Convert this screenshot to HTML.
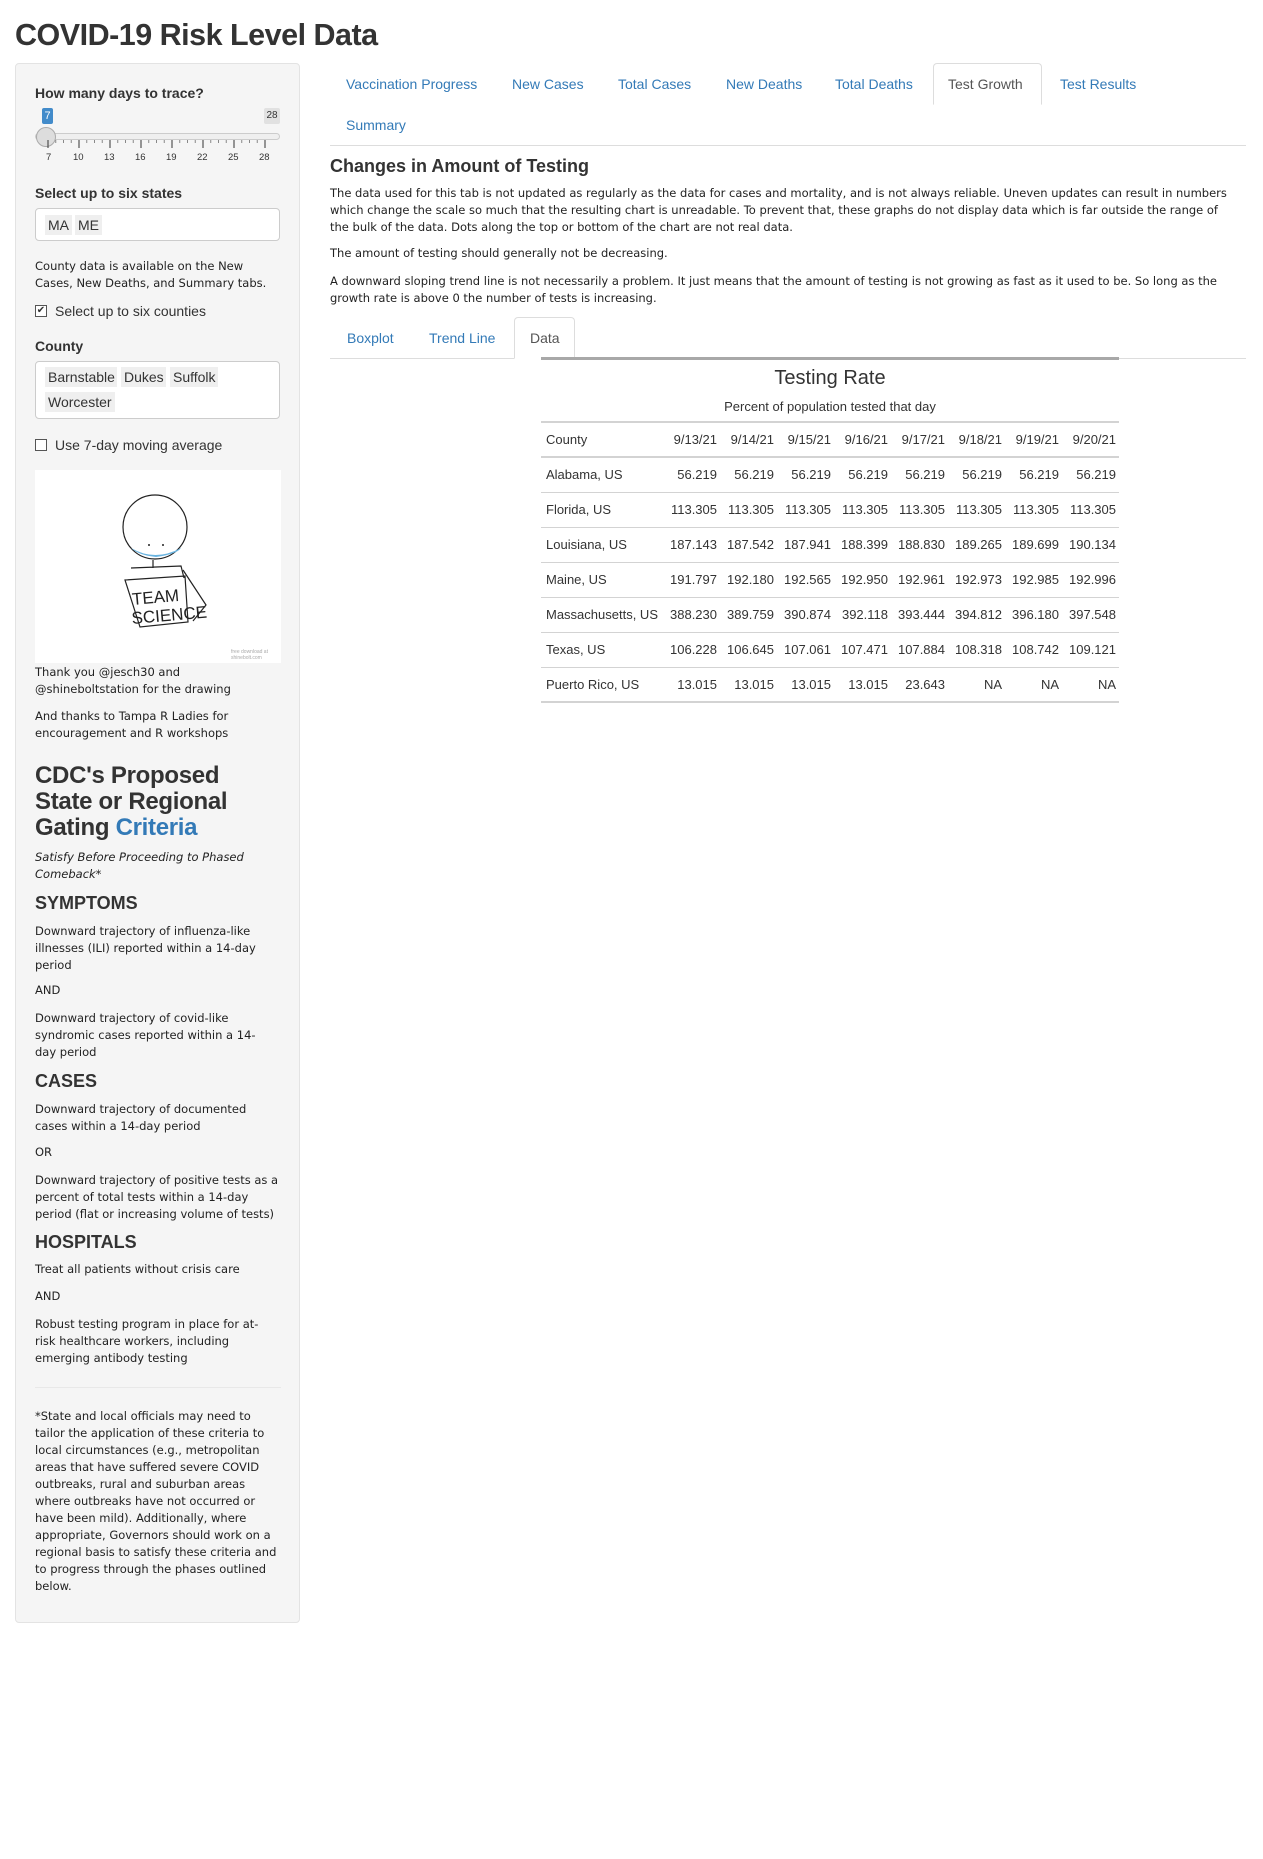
<!DOCTYPE html>
<html><head><meta charset="utf-8">
<style>
*{box-sizing:border-box;margin:0;padding:0}
body{width:1263px;height:1859px;background:#fff;font-family:"Liberation Sans",Arial,sans-serif;color:#333;position:relative;overflow:hidden}
.a{position:absolute;white-space:nowrap}
.v{font-family:"DejaVu Sans",Verdana,sans-serif;font-size:11.5px;color:#222}
h1{position:absolute;left:15px;top:18px;font-size:30.5px;font-weight:bold;letter-spacing:-0.5px;color:#333}
.side{position:absolute;left:15px;top:63px;width:285px;height:1560px;background:#f5f5f5;border:1px solid #e3e3e3;border-radius:4px}
.lbl{font-weight:bold;font-size:14px;color:#333}
.box{position:absolute;background:#fff;border:1px solid #ccc;border-radius:4px}
.tag{position:absolute;background:#efefef;font-size:14px;padding:2px 3px;color:#333}
.blue{color:#337ab7}
.tab{position:absolute;font-size:14px;color:#337ab7}
.act{position:absolute;border:1px solid #ddd;border-bottom:1px solid #fff;border-radius:4px 4px 0 0;background:#fff}
table{border-collapse:collapse;font-size:13px;color:#333;table-layout:fixed}
td{height:35px;border-top:1px solid #d3d3d3;text-align:right;padding:0 3px 0 0;vertical-align:middle;white-space:nowrap}
td:first-child{text-align:left;padding-left:5px}
</style></head><body>
<h1>COVID-19 Risk Level Data</h1>
<div class="side"></div>
<div class="a lbl" style="left:35px;top:85px">How many days to trace?</div>
<div class="a" style="left:42px;top:108px;width:11px;height:16px;background:#428bca;color:#fff;font-size:11px;text-align:center;line-height:16px;border-radius:2px">7</div>
<div class="a" style="left:264px;top:108px;width:16px;height:16px;background:#e1e1e1;color:#333;font-size:10px;text-align:center;line-height:16px;border-radius:2px">28</div>
<div class="a" style="left:35px;top:133px;width:245px;height:7px;background:#efefef;border:1px solid #ccc;border-radius:4px"></div>
<div class="a" style="left:36px;top:127px;width:20px;height:20px;border-radius:50%;background:#ddd;border:1px solid #aaa"></div>
<svg class="a" style="left:35px;top:140px" width="250" height="10"><g stroke="#333" stroke-width="1">
<path d="M13 0v8M44 0v8M75 0v8M106 0v8M137 0v8M168 0v8M199 0v8M230 0v8"/>
<path d="M20.75 0v3M28.5 0v3M36.25 0v3M51.75 0v3M59.5 0v3M67.25 0v3M82.75 0v3M90.5 0v3M98.25 0v3M113.75 0v3M121.5 0v3M129.25 0v3M144.75 0v3M152.5 0v3M160.25 0v3M175.75 0v3M183.5 0v3M191.25 0v3M206.75 0v3M214.5 0v3M222.25 0v3" stroke="#888"/></g></svg>
<div class="a" style="left:46px;top:152px;font-size:9.5px">7</div>
<div class="a" style="left:73px;top:152px;font-size:9.5px">10</div>
<div class="a" style="left:104px;top:152px;font-size:9.5px">13</div>
<div class="a" style="left:135px;top:152px;font-size:9.5px">16</div>
<div class="a" style="left:166px;top:152px;font-size:9.5px">19</div>
<div class="a" style="left:197px;top:152px;font-size:9.5px">22</div>
<div class="a" style="left:228px;top:152px;font-size:9.5px">25</div>
<div class="a" style="left:259px;top:152px;font-size:9.5px">28</div>
<div class="a lbl" style="left:35px;top:185px">Select up to six states</div>
<div class="box" style="left:35px;top:208px;width:245px;height:33px"></div>
<div class="tag" style="left:45px;top:215px;width:27px">MA</div>
<div class="tag" style="left:75px;top:215px;width:27px">ME</div>
<div class="a v" style="left:35px;top:258px;line-height:17px">County data is available on the New<br>Cases, New Deaths, and Summary tabs.</div>
<div class="a" style="left:35px;top:305px;width:12px;height:12px;border:1px solid #555;background:#fff;font-size:10px;line-height:10px;text-align:center">✔</div>
<div class="a" style="left:55px;top:303px;font-size:14px">Select up to six counties</div>
<div class="a lbl" style="left:35px;top:338px">County</div>
<div class="box" style="left:35px;top:361px;width:245px;height:58px"></div>
<div class="tag" style="left:45px;top:367px;width:72px">Barnstable</div>
<div class="tag" style="left:121px;top:367px;width:45px">Dukes</div>
<div class="tag" style="left:170px;top:367px;width:48px">Suffolk</div>
<div class="tag" style="left:45px;top:392px;width:70px">Worcester</div>
<div class="a" style="left:35px;top:439px;width:12px;height:12px;border:1px solid #555;background:#fff"></div>
<div class="a" style="left:55px;top:437px;font-size:14px">Use 7-day moving average</div>
<div class="a" style="left:35px;top:470px;width:246px;height:193px;background:#fff"></div>
<svg class="a" style="left:35px;top:470px" width="246" height="193"><g fill="none" stroke="#222" stroke-width="1.2">
<circle cx="120" cy="57" r="32"/>
<path d="M118 90v8M96 98l50-2 3 12M90 110l60-4 3 46-48 5z"/>
<path d="M148 100l23 35-13 16"/>
<text x="98" y="133" font-size="17" fill="#222" stroke="none" font-family="Liberation Sans Narrow,Liberation Sans" transform="rotate(-5 120 140)">TEAM</text>
<text x="96" y="152" font-size="17" fill="#222" stroke="none" font-family="Liberation Sans Narrow,Liberation Sans" transform="rotate(-5 120 140)">SCIENCE</text></g>
<path d="M96 78q24 14 50 0 -4 6 -25 9 -18 -2 -25 -9z" fill="#6ab4e0"/>
<circle cx="114" cy="75" r="1" fill="#222"/><circle cx="128" cy="75" r="1" fill="#222"/>
<text x="196" y="183" font-size="5" fill="#aaa">free download at</text><text x="196" y="189" font-size="5" fill="#aaa">shinebolt.com</text></svg>
<div class="a v" style="left:35px;top:664px;line-height:17px">Thank you @jesch30 and<br>@shineboltstation for the drawing</div>
<div class="a v" style="left:35px;top:708px;line-height:17px">And thanks to Tampa R Ladies for<br>encouragement and R workshops</div>
<div class="a" style="left:35px;top:763px;font-size:24px;font-weight:bold;line-height:26px;letter-spacing:-0.3px">CDC's Proposed<br>State or Regional<br>Gating <span class="blue">Criteria</span></div>
<div class="a v" style="left:35px;top:849px;line-height:17px;font-style:italic">Satisfy Before Proceeding to Phased<br>Comeback*</div>
<div class="a" style="left:35px;top:893px;font-size:18px;font-weight:bold">SYMPTOMS</div>
<div class="a v" style="left:35px;top:923px;line-height:17px">Downward trajectory of influenza-like<br>illnesses (ILI) reported within a 14-day<br>period</div>
<div class="a v" style="left:35px;top:983px">AND</div>
<div class="a v" style="left:35px;top:1010px;line-height:17px">Downward trajectory of covid-like<br>syndromic cases reported within a 14-<br>day period</div>
<div class="a" style="left:35px;top:1071px;font-size:18px;font-weight:bold">CASES</div>
<div class="a v" style="left:35px;top:1101px;line-height:17px">Downward trajectory of documented<br>cases within a 14-day period</div>
<div class="a v" style="left:35px;top:1145px">OR</div>
<div class="a v" style="left:35px;top:1172px;line-height:17px">Downward trajectory of positive tests as a<br>percent of total tests within a 14-day<br>period (flat or increasing volume of tests)</div>
<div class="a" style="left:35px;top:1232px;font-size:18px;font-weight:bold">HOSPITALS</div>
<div class="a v" style="left:35px;top:1262px">Treat all patients without crisis care</div>
<div class="a v" style="left:35px;top:1289px">AND</div>
<div class="a v" style="left:35px;top:1316px;line-height:17px">Robust testing program in place for at-<br>risk healthcare workers, including<br>emerging antibody testing</div>
<div class="a" style="left:35px;top:1387px;width:246px;border-top:1px solid #e8e8e8"></div>
<div class="a v" style="left:35px;top:1408px;line-height:17px">*State and local officials may need to<br>tailor the application of these criteria to<br>local circumstances (e.g., metropolitan<br>areas that have suffered severe COVID<br>outbreaks, rural and suburban areas<br>where outbreaks have not occurred or<br>have been mild). Additionally, where<br>appropriate, Governors should work on a<br>regional basis to satisfy these criteria and<br>to progress through the phases outlined<br>below.</div>

<!-- main -->
<div class="act" style="left:933px;top:63px;width:109px;height:42px"></div>
<div class="a" style="left:330px;top:145px;width:916px;border-top:1px solid #ddd"></div>
<div class="tab" style="left:346px;top:76px">Vaccination Progress</div>
<div class="tab" style="left:512px;top:76px">New Cases</div>
<div class="tab" style="left:618px;top:76px">Total Cases</div>
<div class="tab" style="left:726px;top:76px">New Deaths</div>
<div class="tab" style="left:835px;top:76px">Total Deaths</div>
<div class="tab" style="left:948px;top:76px;color:#555">Test Growth</div>
<div class="tab" style="left:1060px;top:76px">Test Results</div>
<div class="tab" style="left:346px;top:117px">Summary</div>
<div class="a" style="left:330px;top:156px;font-size:18px;font-weight:bold;color:#333">Changes in Amount of Testing</div>
<div class="a v" style="left:330px;top:185px;line-height:17px">The data used for this tab is not updated as regularly as the data for cases and mortality, and is not always reliable. Uneven updates can result in numbers<br>which change the scale so much that the resulting chart is unreadable. To prevent that, these graphs do not display data which is far outside the range of<br>the bulk of the data. Dots along the top or bottom of the chart are not real data.</div>
<div class="a v" style="left:330px;top:246px">The amount of testing should generally not be decreasing.</div>
<div class="a v" style="left:330px;top:273px;line-height:17px">A downward sloping trend line is not necessarily a problem. It just means that the amount of testing is not growing as fast as it used to be. So long as the<br>growth rate is above 0 the number of tests is increasing.</div>
<div class="act" style="left:514px;top:317px;width:61px;height:42px"></div>
<div class="a" style="left:330px;top:358px;width:184px;border-top:1px solid #ddd"></div>
<div class="a" style="left:575px;top:358px;width:671px;border-top:1px solid #ddd"></div>
<div class="tab" style="left:347px;top:330px">Boxplot</div>
<div class="tab" style="left:429px;top:330px">Trend Line</div>
<div class="tab" style="left:530px;top:330px;color:#555">Data</div>
<div class="a" style="left:541px;top:357px;width:578px;border-top:3px solid #a8a8a8"></div>
<div class="a" style="left:541px;top:367px;width:578px;text-align:center;font-size:20px;color:#333">Testing Rate</div>
<div class="a" style="left:541px;top:399px;width:578px;text-align:center;font-size:13px;color:#333">Percent of population tested that day</div>
<table class="a" style="left:541px;top:421px;width:578px;border-top:2px solid #d3d3d3;border-bottom:2px solid #d3d3d3">
<colgroup><col style="width:122px"><col style="width:57px"><col style="width:57px"><col style="width:57px"><col style="width:57px"><col style="width:57px"><col style="width:57px"><col style="width:57px"><col style="width:57px"></colgroup>
<tr style="border-bottom:2px solid #d3d3d3"><td style="height:32px;border:0">County</td><td>9/13/21</td><td>9/14/21</td><td>9/15/21</td><td>9/16/21</td><td>9/17/21</td><td>9/18/21</td><td>9/19/21</td><td>9/20/21</td></tr>
<tr><td>Alabama, US</td><td>56.219</td><td>56.219</td><td>56.219</td><td>56.219</td><td>56.219</td><td>56.219</td><td>56.219</td><td>56.219</td></tr>
<tr><td>Florida, US</td><td>113.305</td><td>113.305</td><td>113.305</td><td>113.305</td><td>113.305</td><td>113.305</td><td>113.305</td><td>113.305</td></tr>
<tr><td>Louisiana, US</td><td>187.143</td><td>187.542</td><td>187.941</td><td>188.399</td><td>188.830</td><td>189.265</td><td>189.699</td><td>190.134</td></tr>
<tr><td>Maine, US</td><td>191.797</td><td>192.180</td><td>192.565</td><td>192.950</td><td>192.961</td><td>192.973</td><td>192.985</td><td>192.996</td></tr>
<tr><td>Massachusetts, US</td><td>388.230</td><td>389.759</td><td>390.874</td><td>392.118</td><td>393.444</td><td>394.812</td><td>396.180</td><td>397.548</td></tr>
<tr><td>Texas, US</td><td>106.228</td><td>106.645</td><td>107.061</td><td>107.471</td><td>107.884</td><td>108.318</td><td>108.742</td><td>109.121</td></tr>
<tr><td>Puerto Rico, US</td><td>13.015</td><td>13.015</td><td>13.015</td><td>13.015</td><td>23.643</td><td>NA</td><td>NA</td><td>NA</td></tr>
</table>
</body></html>
